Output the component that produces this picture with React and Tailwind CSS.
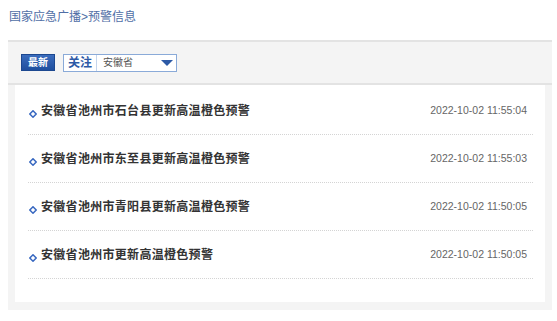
const alerts = [
  { title: "安徽省池州市石台县更新高温橙色预警", time: "2022-10-02 11:55:04" },
  { title: "安徽省池州市东至县更新高温橙色预警", time: "2022-10-02 11:55:03" },
  { title: "安徽省池州市青阳县更新高温橙色预警", time: "2022-10-02 11:50:05" },
  { title: "安徽省池州市更新高温橙色预警", time: "2022-10-02 11:50:05" },
];

function Diamond() {
  return (
    <svg width="8" height="8" viewBox="0 0 8 8" className="mt-[6px] ml-[1px] flex-shrink-0">
      <path d="M4 0.8 L7.2 4 L4 7.2 L0.8 4 Z" fill="none" stroke="#3767c0" strokeWidth="1.5" />
    </svg>
  );
}

export default function App() {
  return (
    <div className="w-[557px] h-[321px] bg-white font-['Liberation_Sans','Noto_Sans_CJK_SC',sans-serif] overflow-hidden">
      <div className="pt-[9px] pl-[9px] h-[40px] text-[12px] leading-[16px] text-[#4f6ea6]">
        国家应急广播&gt;预警信息
      </div>

      <div className="ml-[8px] w-[544px] h-[270px] bg-[#f4f4f4] border-t-2 border-[#e3e3e3] flex flex-col">
        <div className="h-[43px] flex items-center pl-[13px] gap-[8px] border-b-2 border-[#e3e3e3]">
          <button className="w-[34px] h-[17px] bg-gradient-to-b from-[#3a6cbd] to-[#1f4f9e] border border-[#1c4890] text-white text-[10px] font-bold leading-none flex items-center justify-center">
            最新
          </button>
          <div className="w-[114px] h-[18px] bg-white border border-[#8aaad8] flex items-center">
            <span className="w-[33px] h-full flex items-center justify-center text-[12px] font-bold text-[#2d5aa6] border-r border-[#c5d5ec]">
              关注
            </span>
            <span className="pl-[6px] text-[10px] text-[#555] flex-1">安徽省</span>
            <svg width="12" height="6" viewBox="0 0 12 6" className="mr-[3px]">
              <path d="M0 0 H12 L6 6 Z" fill="#2d5aa6" />
            </svg>
          </div>
        </div>

        <div className="ml-[7px] w-[530px] h-[217px] bg-white">
          <ul className="pl-[13px] pr-[12px] pt-[2px]">
            {alerts.map((a, i) => (
              <li
                key={i}
                className="h-[48px] flex items-center border-b border-dotted border-[#d4d4d4]"
              >
                <Diamond />
                <span className="ml-[4px] text-[12px] font-bold text-[#333] tracking-[0.3px] flex-1">
                  {a.title}
                </span>
                <span className="mr-[6px] text-[10.5px] text-[#666]">{a.time}</span>
              </li>
            ))}
          </ul>
        </div>
      </div>
    </div>
  );
}
